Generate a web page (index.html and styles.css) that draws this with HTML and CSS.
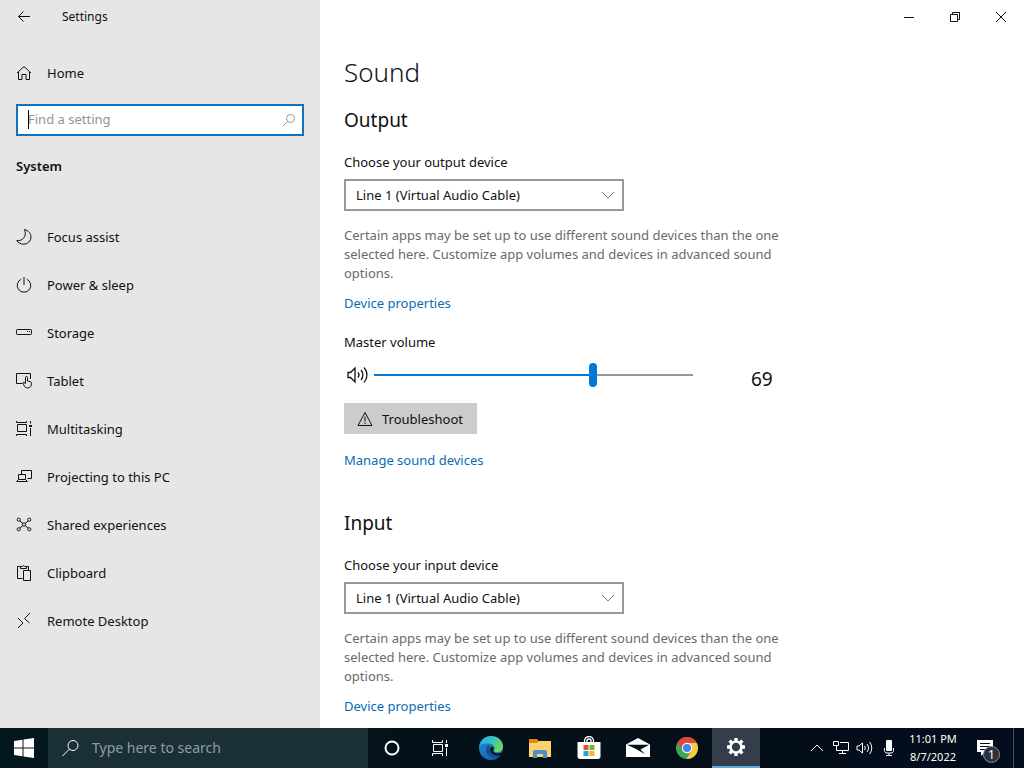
FILE: index.html
```html
<!DOCTYPE html>
<html lang="en">
<head>
    <meta charset="utf-8">
    <title>Settings</title>
    <meta name="viewport" content="width=device-width, initial-scale=1">
    <link rel="stylesheet" href="styles.css">
</head>
<body>

<div class="window">
    <aside class="sidebar">
        <header class="titlebar">
            <button class="back" aria-label="Back">
                <svg width="16" height="16" viewBox="0 0 16 16"><path d="M14 7.500H2.500M7.500 2.500l-5 5 5 5"/></svg>
            </button>
            <span class="app-name">Settings</span>
        </header>

        <a class="nav-link home" href="#home">
            <svg width="16" height="16" viewBox="0 0 16 16"><path d="M1 8l7-6.500L15 8M2.500 7v7.500h3.500V9.500h4v5h3.500V7"/></svg>
            Home
        </a>

        <div class="find">
            <input class="find-input" type="text" placeholder="Find a setting" aria-label="Find a setting">
            <svg class="find-icon" width="14" height="14" viewBox="0 0 14 14"><circle cx="8.500" cy="5.500" r="4"/><path d="M5.500 8.500L1 13"/></svg>
        </div>

        <h2 class="group">System</h2>

        <nav>
            <a class="nav-link" href="#focus">
                <svg width="16" height="16" viewBox="0 0 16 16"><path d="M8.500.5C12.500 1.500 15 4.500 15 8a7.200 7.200 0 0 1-7.200 7.200C4.800 15.200 2 13.800.8 11.500 6 12.500 11.500 7.500 8.500.5z"/></svg>
                Focus assist
            </a>
            <a class="nav-link" href="#power">
                <svg width="16" height="16" viewBox="0 0 16 16"><path d="M8 0v8M5.200 2.200a6.800 6.800 0 1 0 5.600 0"/></svg>
                Power &amp; sleep
            </a>
            <a class="nav-link" href="#storage">
                <svg width="16" height="16" viewBox="0 0 16 16"><rect x=".5" y="4.500" width="15" height="5" rx=".8"/><path d="M11 6.500h1M13 6.500h1"/></svg>
                Storage
            </a>
            <a class="nav-link" href="#tablet">
                <svg width="16" height="16" viewBox="0 0 16 16"><path d="M6.500 10.500h-6v-10h14V6"/><path d="M9.500 10V4.500a1 1 0 0 1 2 0V8l3 .8c.7.200 1 .7 1 1.400 0 3-1.200 4.800-3.800 4.800-2 0-3.200-1-4-3.200L7 10.200c-.3-1.200 1.300-1.600 2.500.8"/></svg>
                Tablet
            </a>
            <a class="nav-link" href="#multitasking">
                <svg width="16" height="16" viewBox="0 0 16 16"><path d="M.5 0v1.500h10V0M.5 15v-1.500h10V15M1.500 3.500h9v7h-9zM14.500 0v2.500M14.500 7v8"/><path class="solid" d="M13 4h3v2h-3z"/></svg>
                Multitasking
            </a>
            <a class="nav-link" href="#projecting">
                <svg width="16" height="16" viewBox="0 0 16 16"><path d="M5.500 5V1.500h10v8h-4M2.500 5.500h7v5h-7zM2.500 10.500l-2 2h11l-2-2"/></svg>
                Projecting to this PC
            </a>
            <a class="nav-link" href="#shared">
                <svg width="16" height="16" viewBox="0 0 16 16"><circle cx="2.700" cy="2.700" r="1.600"/><circle cx="13.300" cy="2.700" r="1.600"/><circle cx="2.700" cy="12.300" r="1.600"/><circle cx="13.300" cy="12.300" r="1.600"/><circle cx="8" cy="7.500" r="1.700"/><path d="M4 4l2.800 2.400M12 4L9.200 6.400M4 11l2.800-2.400M12 11L9.200 8.600"/></svg>
                Shared experiences
            </a>
            <a class="nav-link" href="#clipboard">
                <svg width="16" height="16" viewBox="0 0 16 16"><path d="M6.500 13.500h-5v-12h3M10 1.500h2.500V5M4.500 3.500v-2h1.800a1.300 1.300 0 0 1 2.400 0h1.800v2zM7.500 5.500h7v10h-7z"/></svg>
                Clipboard
            </a>
            <a class="nav-link" href="#remote">
                <svg width="16" height="16" viewBox="0 0 16 16"><path d="M2 5l5 5-5 5M14 0L8.500 5.500 13.500 10"/></svg>
                Remote Desktop
            </a>
        </nav>
    </aside>

    <main class="content">
        <div class="titlebar caption">
            <button class="caption-button" aria-label="Minimize"><svg width="12" height="12" viewBox="0 0 12 12"><path d="M1 6.500h10"/></svg></button>
            <button class="caption-button" aria-label="Restore"><svg width="12" height="12" viewBox="0 0 12 12"><path d="M1.500 3.500h7v7h-7zM3.500 3.500v-2h7v7h-2"/></svg></button>
            <button class="caption-button" aria-label="Close"><svg width="12" height="12" viewBox="0 0 12 12"><path d="M1 1l10 10M11 1L1 11"/></svg></button>
        </div>

        <div class="page">
            <h1>Sound</h1>

            <section>
                <h2>Output</h2>
                <label for="output-device">Choose your output device</label>
                <div class="picker">
                    <select id="output-device"><option>Line 1 (Virtual Audio Cable)</option></select>
                    <svg class="chevron" width="12" height="8" viewBox="0 0 12 8"><path d="M0 1l6 6 6-6"/></svg>
                </div>
                <p>Certain apps may be set up to use different sound devices than the one selected here. Customize app volumes and devices in advanced sound options.</p>
                <a class="link" href="#output-properties">Device properties</a>

                <label class="volume-label" for="volume">Master volume</label>
                <div class="volume">
                    <svg class="speaker" width="24" height="24" viewBox="0 0 24 24"><path d="M4 9.500h2.500L11 5v14l-4.500-4.500H4z"/><path d="M14 9.500a4 4 0 0 1 0 5M17 7a7.500 7.500 0 0 1 0 10M20 4.500a11 11 0 0 1 0 15"/></svg>
                    <input class="slider" id="volume" type="range" min="0" max="100" value="69" style="--value: 69%">
                    <output for="volume">69</output>
                </div>

                <button class="troubleshoot">
                    <svg width="16" height="16" viewBox="0 0 16 16"><path d="M8 1.500L15 14.500H1zM8 5.500v5M8 11.500v1.500"/></svg>
                    Troubleshoot
                </button>
                <a class="link" href="#manage">Manage sound devices</a>
            </section>

            <section>
                <h2>Input</h2>
                <label for="input-device">Choose your input device</label>
                <div class="picker">
                    <select id="input-device"><option>Line 1 (Virtual Audio Cable)</option></select>
                    <svg class="chevron" width="12" height="8" viewBox="0 0 12 8"><path d="M0 1l6 6 6-6"/></svg>
                </div>
                <p>Certain apps may be set up to use different sound devices than the one selected here. Customize app volumes and devices in advanced sound options.</p>
                <a class="link" href="#input-properties">Device properties</a>
            </section>
        </div>
    </main>
</div>

<footer class="taskbar">
    <button class="task" aria-label="Start">
        <svg class="fill" width="20" height="20" viewBox="0 0 20 20"><path d="M0 3l8.500-1.300v7.800H0zM9.500 1.500L20 0v9.500H9.500zM0 10.500h8.500v7.800L0 17zM9.500 10.500H20V20L9.500 18.500z"/></svg>
    </button>
    <div class="task-search">
        <svg width="18" height="18" viewBox="0 0 18 18"><circle cx="11" cy="6.500" r="5"/><path d="M7.500 10l-7 7"/></svg>
        <input type="text" placeholder="Type here to search" aria-label="Type here to search">
    </div>
    <button class="task" aria-label="Cortana">
        <svg width="16" height="16" viewBox="0 0 16 16"><circle class="ring" cx="8" cy="8" r="6.500"/></svg>
    </button>
    <button class="task" aria-label="Task View">
        <svg width="16" height="16" viewBox="0 0 16 16"><path d="M.5 0v2.500h10V0M.5 16v-2.500h10V16M1.500 4.500h9v7h-9zM14.500 0v3M14.500 8v8"/><path class="fill" d="M13 4h3v3h-3z"/></svg>
    </button>

    <div class="pinned">
        <button class="task" aria-label="Microsoft Edge">
            <svg class="art" width="24" height="24" viewBox="0 0 24 24">
                <defs>
                    <linearGradient id="edge-top" x1="0" y1="0" x2="1" y2=".4"><stop offset="0" stop-color="#2aa5dd"/><stop offset=".5" stop-color="#35bfc8"/><stop offset="1" stop-color="#68d85a"/></linearGradient>
                    <linearGradient id="edge-low" x1="0" y1="0" x2=".6" y2="1"><stop offset="0" stop-color="#1f8fdc"/><stop offset="1" stop-color="#1264b4"/></linearGradient>
                </defs>
                <circle cx="12" cy="12" r="12" fill="url(#edge-low)"/>
                <path fill="url(#edge-top)" d="M.3 10C1.500 4 6.300 0 12 0c7 0 12 5 12 10.500 0 3.700-2.800 5.800-6 5.800-2.500 0-4-1-3-2.300 2-3-1-6.500-5.500-6.500C5.500 7.500 2 8 .3 10z"/>
                <path fill="#164f91" d="M9 9c-3 3-3 10 3.500 12.500 4 1.500 8 0 10-3.500-2.500 1.200-5.500 1.200-8-.2C11.500 16 9.500 13 10.500 10z"/>
                <path fill="#04131c" d="M14.500 14.200c-.7 1.500.8 3.300 4 3.300 1.800 0 3.500-.5 4.600-1.300l.9 2.300-1.500.5c-3 1-7.500.5-9.800-2-1.600-1.800-2-4.500-.7-6 1.500-.8 3.500.8 2.500 3.200z"/>
            </svg>
        </button>
        <button class="task" aria-label="File Explorer">
            <svg class="art" width="24" height="24" viewBox="0 0 24 24"><path fill="#d98a17" d="M1 3h8l2 2.500V9H1z"/><path fill="#fbd368" d="M1 7h8l2-2h12v16H1z"/><path fill="#4a91c9" d="M5 22v-6c0-1 .7-2 2-2h10c1.300 0 2 1 2 2v6h-4v-4H9v4z"/><path fill="#fbd368" d="M9 18h6v3H9z"/></svg>
        </button>
        <button class="task" aria-label="Microsoft Store">
            <svg class="art" width="24" height="24" viewBox="0 0 24 24"><path fill="none" stroke="#fff" stroke-width="1.300" d="M7.500 6.500V5a4.500 4.500 0 0 1 9 0v1.500M10 6.500V4a2.500 2.500 0 0 1 4 0v2.500"/><path fill="#fff" d="M.5 6h23v14.500c0 1.300-1 2.500-2.500 2.500H3C1.500 23 .5 21.800.5 20.500z"/><path fill="#e2502b" d="M6.500 9h5v5h-5z"/><path fill="#79b52a" d="M12.500 9h5v5h-5z"/><path fill="#2a9fdb" d="M6.500 15h5v5h-5z"/><path fill="#f3b61c" d="M12.500 15h5v5h-5z"/></svg>
        </button>
        <button class="task" aria-label="Mail">
            <svg class="art" width="24" height="24" viewBox="0 0 24 24"><path fill="#fff" d="M0 8.500L12 2l12 6.500v12.500H0z"/><path fill="#06121a" d="M1 8.800h22.200L14.500 13.500l4.500 4.700L10 13z"/></svg>
        </button>
        <button class="task" aria-label="Google Chrome">
            <svg class="art" width="24" height="24" viewBox="0 0 24 24"><circle cx="12" cy="12" r="11" fill="#3aa757"/><path fill="#e0453a" d="M2.500 6.500a11 11 0 0 1 19 0L12 9l-4.700 5.300z"/><path fill="#f8cb3c" d="M12 7h9.800a11 11 0 0 1-10.300 16l4.800-8.500z"/><circle cx="12" cy="12" r="5.200" fill="#fff"/><circle cx="12" cy="12" r="4.100" fill="#4285e8"/></svg>
        </button>
        <button class="task active" aria-label="Settings">
            <svg class="art" width="20" height="20" viewBox="0 0 20 20"><circle cx="10" cy="10" r="5.500" fill="none" stroke="#fff" stroke-width="2.600"/><path stroke="#fff" stroke-width="3.400" d="M10 1v3M10 16v3M1 10h3M16 10h3M3.600 3.600l2.200 2.200M14.200 14.200l2.200 2.200M3.600 16.400l2.200-2.200M14.200 5.800l2.200-2.200"/></svg>
        </button>
    </div>

    <div class="tray">
        <button class="tray-icon" aria-label="Show hidden icons"><svg width="14" height="16" viewBox="0 0 14 16"><path d="M1 11l6-6 6 6"/></svg></button>
        <button class="tray-icon" aria-label="Network"><svg width="16" height="16" viewBox="0 0 16 16"><path d="M7 2.500h8.500v8h-12V7M9.500 10.500v3M6 13.500h7M.5 1.500h5v4h-5zM3.500 5.500v2"/></svg></button>
        <button class="tray-icon" aria-label="Volume"><svg width="18" height="16" viewBox="0 0 18 16"><path d="M1 6h2l3.500-3v10L3 10H1zM8.500 6a3 3 0 0 1 0 4M11 4a6 6 0 0 1 0 8M13.500 2a9 9 0 0 1 0 12"/></svg></button>
        <button class="tray-icon" aria-label="Microphone"><svg width="12" height="16" viewBox="0 0 12 16"><rect class="fill" x="3" y="0" width="6" height="11" rx="1"/><path d="M1.500 8v2.500c0 1.500 1 2.500 2.500 2.500h4c1.500 0 2.500-1 2.500-2.500V8M6 13v2.500M3 15.500h6"/></svg></button>
        <time class="clock" datetime="2022-08-07T23:01">11:01 PM<br>8/7/2022</time>
        <button class="notifications" aria-label="1 new notification">
            <svg class="art" width="18" height="18" viewBox="0 0 18 18"><path fill="#fff" d="M1 1h16v12H9l-4 4v-4H1z"/><path stroke="#04101f" d="M4 4.500h10M4 7.500h10M4 10.500h6"/></svg>
            <span class="badge">1</span>
        </button>
        <button class="show-desktop" aria-label="Show desktop"></button>
    </div>
</footer>

</body>
</html>
```
FILE: styles.css
```css
:root {
    --accent: #0078d7;
    --link: #0a6cb4;
}

* {
    box-sizing: border-box;
}

body {
    margin: 0;
    height: 100vh;
    display: flex;
    flex-direction: column;

    font-family: "Noto Sans", "Open Sans", sans-serif;
    font-size: 13px;
    line-height: 20px;
    color: #111;
    background: white;
}

a {
    color: inherit;
    text-decoration: none;
}

button, input, select {
    font: inherit;
    color: inherit;
    margin: 0;
    padding: 0;
    border: none;
    border-radius: 0;
    background: none;
    outline: none;
}

svg {
    display: block;
    flex: none;
    fill: none;
    stroke: currentColor;
}

svg.fill, .fill, .solid {
    fill: currentColor;
    stroke: none;
}

svg.art {
    stroke: none;
}

h1, h2, p {
    margin: 0;
    font-weight: normal;
}

.window {
    flex: 1;
    min-height: 0;
    display: flex;
}

.titlebar {
    display: flex;
    align-items: center;
    height: 33px;
}

/* sidebar */

.sidebar {
    width: 320px;
    flex: none;
    background: #e6e6e6;
}

.back {
    width: 48px;
    display: flex;
    justify-content: center;
}

.app-name {
    margin-left: 14px;
    font-size: 12px;
}

.nav-link {
    display: flex;
    align-items: center;
    gap: 15px;
    height: 48px;
    padding: 0 16px;
}

.home {
    margin: 16px 0 7px;
}

.find {
    position: relative;
    margin: 0 16px;
}

.find-input {
    display: block;
    width: 100%;
    height: 32px;
    padding: 0 32px 2px 10px;
    border: 2px solid #1173c0;
    /* text caret */
    background: linear-gradient(black, black) 10px 4px / 1px 19px no-repeat white;
}

.find-input::placeholder {
    color: #949494;
    opacity: 1;
}

.find-icon {
    position: absolute;
    right: 8px;
    top: 9px;
    color: #999;
}

.group {
    margin: 14px 16px 31px;
    line-height: 32px;
    font-size: 13px;
    font-weight: 600;
}

/* sound page */

.content {
    flex: 1;
    min-width: 0;
    overflow: hidden;
}

.caption {
    justify-content: flex-end;
}

.caption-button {
    display: flex;
    align-items: center;
    justify-content: center;
    width: 46px;
    height: 32px;
}

.page {
    max-width: 494px;
    padding: 19px 24px;
}

.page h1 {
    font-size: 26px;
    font-weight: 300;
    line-height: 40px;
    margin-bottom: 14px;
}

.page h2 {
    font-size: 19px;
    line-height: 28px;
    margin-bottom: 18px;
}

.page label {
    display: block;
}

.page p {
    margin: 15px 0 10px;
    line-height: 19px;
    color: #6a6a6a;
}

section + section {
    margin-top: 39px;
}

.picker {
    position: relative;
    width: 280px;
    margin-top: 7px;
}

.picker select {
    display: block;
    appearance: none;
    width: 100%;
    height: 32px;
    padding: 0 32px 0 10px;
    border: 2px solid #999;
    background: white;
}

.chevron {
    position: absolute;
    right: 10px;
    top: 12px;
    color: #777;
    pointer-events: none;
}

.link {
    display: block;
    color: var(--link);
}

.page .volume-label {
    margin: 19px 0 11px;
}

.volume {
    display: flex;
    align-items: flex-start;
    margin-bottom: 8px;
}

.speaker {
    stroke-width: 1.3;
}

.slider {
    appearance: none;
    flex: 1;
    min-width: 0;
    max-width: 319px;
    height: 24px;
    margin: 0 58px 0 6px;
    background:
        linear-gradient(var(--accent), var(--accent)) 0 11px / var(--value) 2px no-repeat,
        linear-gradient(#999, #999) 0 11px / 100% 2px no-repeat;
}

.slider::-webkit-slider-thumb {
    appearance: none;
    width: 8px;
    height: 24px;
    border-radius: 4px;
    background: var(--accent);
}

.volume output {
    font-size: 19px;
    line-height: 32px;
}

.troubleshoot {
    display: flex;
    align-items: center;
    gap: 9px;
    height: 31px;
    padding: 0 14px 0 13px;
    margin-bottom: 16px;
    background: #ccc;
}

/* taskbar */

.taskbar {
    display: flex;
    height: 40px;
    flex: none;
    color: white;
    background: linear-gradient(90deg, #03171e, #041019 50%, #030c1c);
}

.task {
    display: flex;
    align-items: center;
    justify-content: center;
    width: 48px;
    height: 40px;
}

.ring {
    stroke-width: 2;
}

.task-search {
    display: flex;
    align-items: center;
    gap: 12px;
    width: 320px;
    padding: 0 14px;
    background: #1b2f37;
}

.task-search input {
    flex: 1;
    min-width: 0;
    font-size: 14px;
}

.task-search input::placeholder {
    color: #8f9da2;
    opacity: 1;
}

.pinned {
    display: flex;
    gap: 1px;
    margin-left: 3px;
}

.active {
    background: #333e4a;
    border-bottom: 2px solid #62a9dd;
}

.tray {
    display: flex;
    align-items: center;
    margin-left: auto;
}

.tray-icon {
    display: flex;
    justify-content: center;
    width: 24px;
}

.clock {
    width: 64px;
    font-size: 11px;
    line-height: 18px;
    text-align: center;
}

.notifications {
    position: relative;
    display: flex;
    align-items: center;
    width: 48px;
    height: 40px;
    padding-left: 11px;
}

.badge {
    position: absolute;
    left: 18px;
    top: 18px;
    width: 17px;
    height: 17px;
    border: 1px solid #8b9098;
    border-radius: 50%;
    background: #2b323c;
    font-size: 12px;
    line-height: 15px;
    text-align: center;
}

.show-desktop {
    width: 11px;
    height: 40px;
    border-left: 1px solid #48505c;
}
```
